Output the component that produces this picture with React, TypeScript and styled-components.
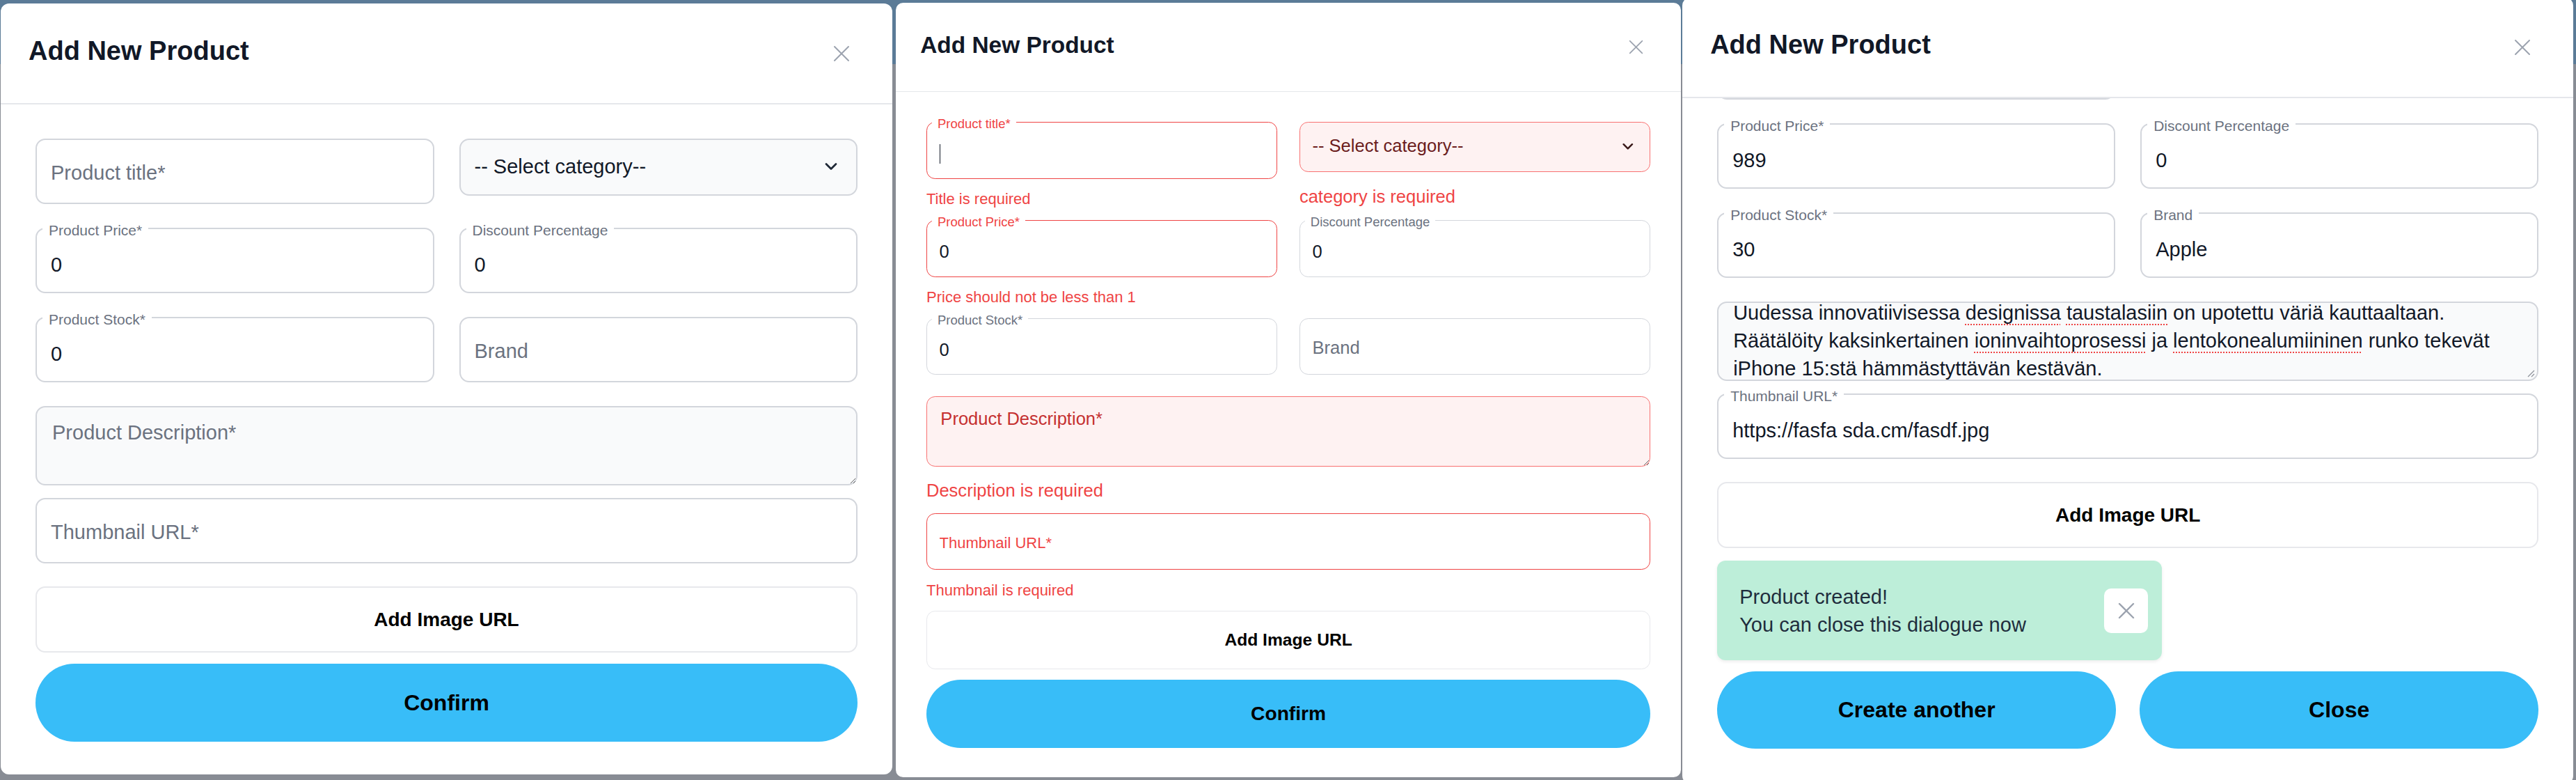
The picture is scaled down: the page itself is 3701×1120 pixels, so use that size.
import React, { useLayoutEffect, useRef } from 'react';
import styled, { createGlobalStyle } from 'styled-components';

type Tone = 'neutral' | 'error';

const GlobalStyle = createGlobalStyle`
  html, body { margin: 0; padding: 0; }
  body {
    font-family: "Liberation Sans", Arial, Helvetica, sans-serif;
    overflow: hidden;
    background: #888c94;
  }
  *, *::before, *::after { box-sizing: border-box; }
`;

const Backdrop = styled.div`
  display: flex;
  align-items: flex-start;
  width: 3701px;
  height: 1120px;
  overflow: hidden;
  background: linear-gradient(to bottom, #5b7b97 0, #5b7b97 92px, #888c94 92px);
`;

const Slot = styled.div<{ $top: number; $left: number }>`
  flex: none;
  margin-top: ${(p) => p.$top}px;
  margin-left: ${(p) => p.$left}px;
`;

const Modal = styled.div<{ $width: number; $zoom?: number; $height?: number }>`
  width: ${(p) => p.$width}px;
  height: ${(p) => (p.$height ? `${p.$height}px` : 'auto')};
  zoom: ${(p) => p.$zoom ?? 1};
  background: #ffffff;
  border-radius: 12px;
  display: flex;
  flex-direction: column;
  overflow: hidden;
`;

const Header = styled.header`
  flex: none;
  height: 145px;
  border-bottom: 2px solid #e5e7eb;
  display: flex;
  align-items: center;
  justify-content: space-between;
  padding: 0 51px 0 40px;
`;

const Title = styled.h3`
  margin: 0 0 6px;
  font-size: 38px;
  line-height: 1.2;
  font-weight: 700;
  color: #111827;
`;

const IconButton = styled.button`
  width: 44px;
  height: 44px;
  padding: 0;
  border: 0;
  background: transparent;
  display: flex;
  align-items: center;
  justify-content: center;
  cursor: pointer;
`;

const Body = styled.div<{ $bottom?: number }>`
  flex: 1 1 auto;
  min-height: 0;
  overflow: hidden;
  padding: 38px 50px ${(p) => p.$bottom ?? 47}px;
  display: flex;
  flex-direction: column;
`;

const Inner = styled.div`
  flex: none;
  display: flex;
  flex-direction: column;
`;

const FieldGrid = styled.div`
  display: grid;
  grid-template-columns: 1fr 1fr;
  column-gap: 36px;
  row-gap: 23px;
  align-items: start;
`;

const Cell = styled.div`
  min-width: 0;
  display: flex;
  flex-direction: column;
`;

const Section = styled.div<{ $mt: number }>`
  margin-top: ${(p) => p.$mt}px;
  display: flex;
  flex-direction: column;
`;

const Outline = styled.fieldset<{ $tone: Tone }>`
  margin: 0;
  min-width: 0;
  padding: 0 20px;
  border: 2px solid ${(p) => (p.$tone === 'error' ? '#ef4444' : '#d3d6dc')};
  border-radius: 14px;
  background: #ffffff;
`;

const Notch = styled.legend<{ $open: boolean; $tone: Tone }>`
  height: 24px;
  margin-left: -12px;
  padding: ${(p) => (p.$open ? '0 9px' : '0')};
  font-size: 21px;
  line-height: 30px;
  white-space: nowrap;
  color: ${(p) => (p.$tone === 'error' ? '#ef4444' : '#6b7280')};
`;

const FieldContent = styled.div<{ $floated: boolean }>`
  height: 79px;
  display: flex;
  align-items: center;
  padding-bottom: ${(p) => (p.$floated ? 0 : 8)}px;
  font-size: 29px;
  line-height: 40px;
  color: #111827;
  white-space: nowrap;
  overflow: hidden;
`;

const Placeholder = styled.span<{ $tone: Tone; $small?: boolean }>`
  color: ${(p) => (p.$tone === 'error' ? '#ef4444' : '#6b7280')};
  font-size: ${(p) => (p.$small ? 25 : 29)}px;
`;

const Caret = styled.span`
  display: block;
  width: 2px;
  height: 32px;
  background: #111827;
`;

const SelectBox = styled.div<{ $tone: Tone }>`
  margin-top: 11px;
  height: 82px;
  display: flex;
  align-items: center;
  justify-content: space-between;
  padding: 0 26px 2px 20px;
  border: 2px solid ${(p) => (p.$tone === 'error' ? '#f87171' : '#d3d6dc')};
  border-radius: 14px;
  background: ${(p) => (p.$tone === 'error' ? '#fef2f2' : '#f9fafb')};
  font-size: 29px;
  color: ${(p) => (p.$tone === 'error' ? '#6b1d1d' : '#111827')};
  white-space: nowrap;
`;

const ErrorText = styled.p<{ $size: 'sm' | 'lg'; $mt: number; $mb: number }>`
  margin: ${(p) => p.$mt}px 0 ${(p) => p.$mb}px;
  font-size: ${(p) => (p.$size === 'sm' ? 25 : 29)}px;
  line-height: 30px;
  color: #ef4444;
  white-space: nowrap;
`;

const DescriptionArea = styled.textarea<{ $tone: Tone }>`
  display: block;
  width: 100%;
  height: 114px;
  margin: 0;
  padding: 16px 22px;
  border: 2px solid ${(p) => (p.$tone === 'error' ? '#f87171' : '#d3d6dc')};
  border-radius: 14px;
  background: ${(p) => (p.$tone === 'error' ? '#fef2f2' : '#f9fafb')};
  font-family: inherit;
  font-size: 29px;
  line-height: 40px;
  color: #111827;
  resize: vertical;
  outline: none;
  &::placeholder {
    color: ${(p) => (p.$tone === 'error' ? '#c53030' : '#6b7280')};
    opacity: 1;
  }
`;

const DescriptionView = styled.div`
  position: relative;
  width: 100%;
  height: 114px;
  padding: 0 21px;
  border: 2px solid #d3d6dc;
  border-radius: 14px;
  background: #f9fafb;
  overflow: hidden;
`;

const DescText = styled.p`
  margin: -6px 0 0;
  font-size: 29px;
  line-height: 40px;
  color: #111827;
`;

const Misspelled = styled.span`
  text-decoration: underline dotted #ef4444;
  text-decoration-thickness: 2px;
  text-underline-offset: 6px;
`;

const Grip = styled.svg`
  position: absolute;
  right: 3px;
  bottom: 3px;
`;

const SecondaryButton = styled.button<{ $mt: number }>`
  margin-top: ${(p) => p.$mt}px;
  width: 100%;
  height: 95px;
  border: 2px solid #e7e8ec;
  border-radius: 14px;
  background: #ffffff;
  font-family: inherit;
  font-size: 28px;
  font-weight: 700;
  color: #000000;
  cursor: pointer;
`;

const PrimaryButton = styled.button<{ $mt?: number; $h?: number }>`
  margin-top: ${(p) => p.$mt ?? 0}px;
  width: 100%;
  height: ${(p) => p.$h ?? 112}px;
  border: 0;
  border-radius: 999px;
  background: #38bdf8;
  font-family: inherit;
  font-size: 32px;
  font-weight: 700;
  color: #000000;
  cursor: pointer;
`;

const ActionRow = styled.div`
  margin-top: 16px;
  display: grid;
  grid-template-columns: 1fr 1fr;
  column-gap: 34px;
`;

const Toast = styled.div`
  margin-top: 18px;
  width: 639px;
  height: 143px;
  border-radius: 12px;
  background: #bdeed9;
  box-shadow: 0 2px 5px rgba(0, 0, 0, 0.08);
  display: flex;
  align-items: center;
  justify-content: space-between;
  padding: 0 20px 0 32px;
`;

const ToastText = styled.div`
  font-size: 29px;
  line-height: 40px;
  color: #1f2d3d;
`;

const ToastClose = styled.button`
  width: 63px;
  height: 64px;
  border: 0;
  border-radius: 10px;
  background: #ffffff;
  display: flex;
  align-items: center;
  justify-content: center;
  padding: 0;
  cursor: pointer;
`;

function CloseGlyph({ size = 24, stroke = 2 }: { size?: number; stroke?: number }) {
  return (
    <svg width={size} height={size} viewBox="0 0 24 24" fill="none" stroke="#9ca3af" strokeWidth={stroke} strokeLinecap="round">
      <path d="M2 2 22 22M22 2 2 22" />
    </svg>
  );
}

function Chevron({ color }: { color: string }) {
  return (
    <svg width="20" height="12" viewBox="0 0 20 12" fill="none" stroke={color} strokeWidth="2.8" strokeLinecap="round" strokeLinejoin="round">
      <path d="M3 2.5l7 7 7-7" />
    </svg>
  );
}

interface FieldProps {
  label: string;
  value?: string;
  floated?: boolean;
  tone?: Tone;
  caret?: boolean;
  smallPlaceholder?: boolean;
}

function Field({ label, value, floated, tone = 'neutral', caret, smallPlaceholder }: FieldProps) {
  const open = floated ?? !!value;
  return (
    <Outline $tone={tone}>
      <Notch $open={open} $tone={tone}>{open ? label : null}</Notch>
      <FieldContent $floated={open}>
        {caret ? (
          <Caret />
        ) : value ? (
          <span>{value}</span>
        ) : (
          <Placeholder $tone={tone} $small={smallPlaceholder}>{label}</Placeholder>
        )}
      </FieldContent>
    </Outline>
  );
}

function Select({ text, tone = 'neutral' }: { text: string; tone?: Tone }) {
  return (
    <SelectBox $tone={tone} role="combobox">
      <span>{text}</span>
      <Chevron color={tone === 'error' ? '#3b1a1a' : '#1f2937'} />
    </SelectBox>
  );
}

function ModalHeader() {
  return (
    <Header>
      <Title>Add New Product</Title>
      <IconButton aria-label="Close">
        <CloseGlyph />
      </IconButton>
    </Header>
  );
}

function EmptyForm() {
  return (
    <Body>
      <Inner>
        <FieldGrid>
          <Field label="Product title*" />
          <Select text="-- Select category--" />
          <Field label="Product Price*" value="0" />
          <Field label="Discount Percentage" value="0" />
          <Field label="Product Stock*" value="0" />
          <Field label="Brand" />
        </FieldGrid>
        <Section $mt={34}>
          <DescriptionArea $tone="neutral" placeholder="Product Description*" />
        </Section>
        <Section $mt={7}>
          <Field label="Thumbnail URL*" />
        </Section>
        <SecondaryButton $mt={33}>Add Image URL</SecondaryButton>
        <PrimaryButton $mt={16}>Confirm</PrimaryButton>
      </Inner>
    </Body>
  );
}

function InvalidForm() {
  return (
    <Body>
      <Inner>
        <FieldGrid>
          <Cell>
            <Field label="Product title*" tone="error" floated caret />
            <ErrorText $size="sm" $mt={19} $mb={-16}>Title is required</ErrorText>
          </Cell>
          <Cell>
            <Select text="-- Select category--" tone="error" />
            <ErrorText $size="lg" $mt={25} $mb={-11}>category is required</ErrorText>
          </Cell>
          <Cell>
            <Field label="Product Price*" value="0" tone="error" />
            <ErrorText $size="sm" $mt={19} $mb={-16}>Price should not be less than 1</ErrorText>
          </Cell>
          <Cell>
            <Field label="Discount Percentage" value="0" />
          </Cell>
          <Field label="Product Stock*" value="0" />
          <Field label="Brand" />
        </FieldGrid>
        <Section $mt={35}>
          <DescriptionArea $tone="error" placeholder="Product Description*" />
          <ErrorText $size="lg" $mt={24} $mb={4}>Description is required</ErrorText>
        </Section>
        <Section $mt={7}>
          <Field label="Thumbnail URL*" tone="error" smallPlaceholder />
          <ErrorText $size="sm" $mt={19} $mb={-16}>Thumbnail is required</ErrorText>
        </Section>
        <SecondaryButton $mt={34}>Add Image URL</SecondaryButton>
        <PrimaryButton $mt={17}>Confirm</PrimaryButton>
      </Inner>
    </Body>
  );
}

function CreatedForm() {
  const bodyRef = useRef<HTMLDivElement>(null);
  useLayoutEffect(() => {
    if (bodyRef.current) bodyRef.current.scrollTop = 141;
  }, []);
  return (
    <Body ref={bodyRef} $bottom={60}>
      <Inner>
        <FieldGrid>
          <Field label="Product title*" value="iPhone 15" />
          <Select text="smartphones" />
          <Field label="Product Price*" value="989" />
          <Field label="Discount Percentage" value="0" />
          <Field label="Product Stock*" value="30" />
          <Field label="Brand" value="Apple" />
        </FieldGrid>
        <Section $mt={34}>
          <DescriptionView role="textbox" aria-multiline="true">
            <DescText>
              Uudessa innovatiivisessa <Misspelled>designissa</Misspelled> <Misspelled>taustalasiin</Misspelled> on
              upotettu väriä kauttaaltaan. Räätälöity kaksinkertainen <Misspelled>ioninvaihtoprosessi</Misspelled> ja{' '}
              <Misspelled>lentokonealumiininen</Misspelled> runko tekevät iPhone 15:stä hämmästyttävän kestävän.
            </DescText>
            <Grip width="14" height="14" viewBox="0 0 14 14" fill="none" stroke="#8f939b" strokeWidth="1.3">
              <path d="M13 4 4 13M13 9 9 13" />
            </Grip>
          </DescriptionView>
        </Section>
        <Section $mt={7}>
          <Field label="Thumbnail URL*" value="https://fasfa sda.cm/fasdf.jpg" />
        </Section>
        <SecondaryButton $mt={33}>Add Image URL</SecondaryButton>
        <Toast role="status">
          <ToastText>
            Product created!
            <br />
            You can close this dialogue now
          </ToastText>
          <ToastClose aria-label="Dismiss">
            <CloseGlyph size={24} stroke={2.4} />
          </ToastClose>
        </Toast>
        <ActionRow>
          <PrimaryButton $h={111}>Create another</PrimaryButton>
          <PrimaryButton $h={111}>Close</PrimaryButton>
        </ActionRow>
      </Inner>
    </Body>
  );
}

export default function App() {
  return (
    <>
      <GlobalStyle />
      <Backdrop>
        <Slot $top={5} $left={1}>
          <Modal $width={1281}>
            <ModalHeader />
            <EmptyForm />
          </Modal>
        </Slot>
        <Slot $top={4} $left={5}>
          <Modal $width={1282} $zoom={0.88}>
            <ModalHeader />
            <InvalidForm />
          </Modal>
        </Slot>
        <Slot $top={-4} $left={2}>
          <Modal $width={1280} $height={1130}>
            <ModalHeader />
            <CreatedForm />
          </Modal>
        </Slot>
      </Backdrop>
    </>
  );
}
